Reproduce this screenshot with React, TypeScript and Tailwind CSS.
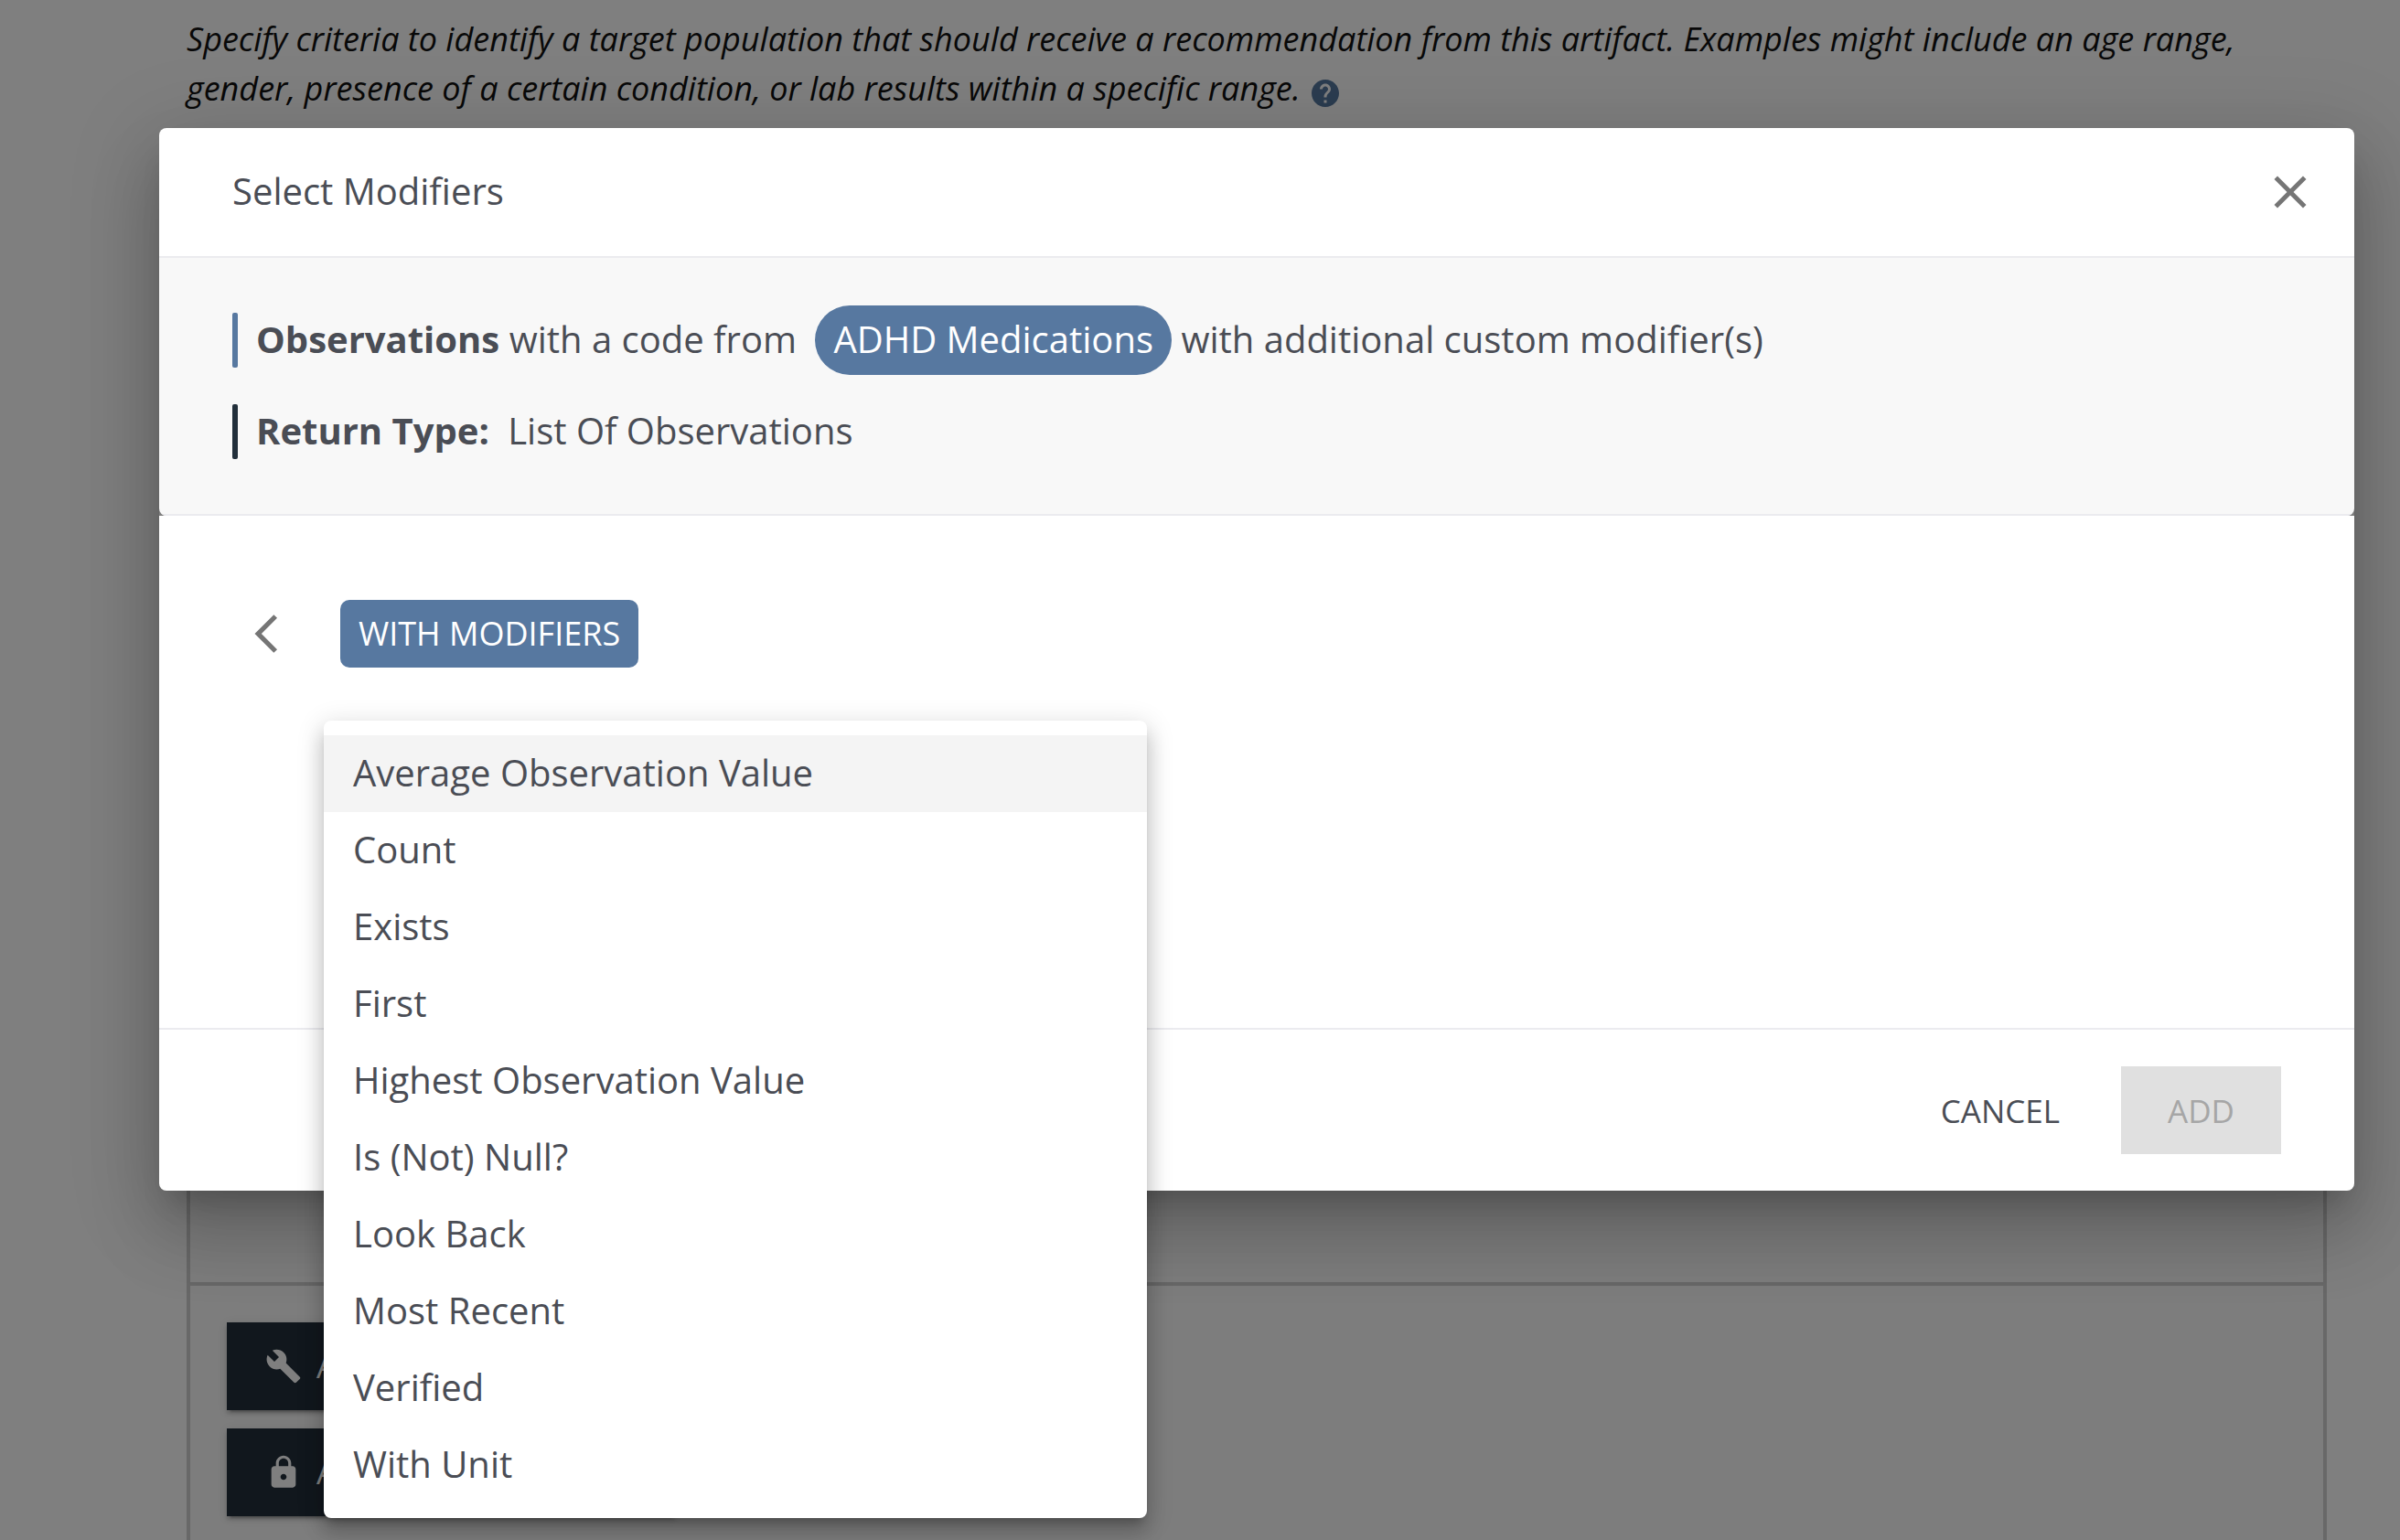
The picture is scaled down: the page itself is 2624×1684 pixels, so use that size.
import React from "react";
import { MdBuild, MdClose, MdHelp, MdLock } from "react-icons/md";

const modifiers = [
  "Average Observation Value",
  "Count",
  "Exists",
  "First",
  "Highest Observation Value",
  "Is (Not) Null?",
  "Look Back",
  "Most Recent",
  "Verified",
  "With Unit",
];

function BackIcon() {
  return (
    <svg viewBox="0 0 24 24" className="size-[50px]" fill="currentColor" aria-hidden="true">
      <path d="M17.77 3.77 16 2 6 12l10 10 1.77-1.77L9.54 12z" />
    </svg>
  );
}

function PageButton({ icon, label }: { icon: React.ReactNode; label: string }) {
  return (
    <button
      type="button"
      aria-label={label}
      className="flex h-24 w-[490px] items-center gap-4 bg-[#222f3b] px-[42px] text-left text-[35px] text-white shadow-[0_6px_2px_-4px_rgba(0,0,0,0.2),0_4px_4px_0_rgba(0,0,0,0.14),0_2px_10px_0_rgba(0,0,0,0.12)]"
    >
      {icon}
      {label.charAt(0)}
    </button>
  );
}

function ArtifactPage() {
  return (
    <main className="flex min-h-screen flex-col bg-white pt-4 pr-20 pl-[204px]">
      <p className="text-[36px] leading-[54px] text-[#111111] italic">
        Specify criteria to identify a target population that should receive a recommendation from
        this artifact. Examples might include an age range, gender, presence of a certain condition,
        or lab results within a specific range.{" "}
        <MdHelp className="inline size-9 align-[-10px] text-[#5778a0]" aria-label="Help" />
      </p>
      <section className="mt-10 flex flex-1 flex-col border-4 border-b-0 border-[#d0d0d0] bg-[#fafafa]">
        <div className="h-[1238px] border-b-4 border-[#d0d0d0]" />
        <div className="flex flex-col gap-5 p-10">
          <PageButton icon={<MdBuild className="size-10" />} label="Add element" />
          <PageButton icon={<MdLock className="size-10" />} label="Add base element" />
        </div>
      </section>
    </main>
  );
}

function ModifierMenu() {
  return (
    <ul
      role="listbox"
      aria-label="Select modifier"
      className="absolute top-56 left-[180px] w-[900px] rounded-lg bg-white py-4 shadow-[0_10px_10px_-6px_rgba(0,0,0,0.2),0_16px_20px_2px_rgba(0,0,0,0.14),0_6px_28px_4px_rgba(0,0,0,0.12)]"
    >
      {modifiers.map((name, i) => (
        <li
          key={name}
          role="option"
          aria-selected={i === 0}
          className={
            i === 0 ? "bg-[#f4f4f4] px-8 pt-[11px] pb-[13px]" : "px-8 pt-[11px] pb-[13px]"
          }
        >
          {name}
        </li>
      ))}
    </ul>
  );
}

function ModifierDialog() {
  return (
    <div
      role="dialog"
      aria-modal="true"
      aria-labelledby="dialog-title"
      className="rounded-lg text-[40px] leading-[60px] text-[#4a4d55] shadow-[0_22px_30px_-14px_rgba(0,0,0,0.2),0_48px_76px_6px_rgba(0,0,0,0.14),0_18px_92px_16px_rgba(0,0,0,0.12)]"
    >
      <div className="overflow-hidden rounded-lg">
        <header className="flex h-[140px] items-center justify-between bg-white pr-10 pl-20">
          <h2 id="dialog-title" className="pb-[2px]">
            Select Modifiers
          </h2>
          <button type="button" aria-label="Close" className="text-[#757575]">
            <MdClose className="size-[60px]" />
          </button>
        </header>
        <div className="flex flex-col gap-10 border-y-2 border-[#ebebef] bg-[#f8f8f8] px-20 py-[60px]">
          <div className="flex h-[60px] items-center">
            <span className="mr-5 h-[60px] w-[6px] rounded-xs bg-[#5778a0]" />
            <p>
              <strong className="font-bold">Observations</strong> with a code from{" "}
              <span className="ml-[10px] inline-block rounded-full bg-[#5778a0] px-5 pt-[7px] pb-[9px] text-white">
                ADHD Medications
              </span>{" "}
              with additional custom modifier(s)
            </p>
          </div>
          <div className="flex h-[60px] items-center">
            <span className="mr-5 h-[60px] w-[6px] rounded-xs bg-[#222f3b]" />
            <p className="pb-[2px]">
              <strong className="mr-[10px] font-bold">Return Type:</strong> List Of Observations
            </p>
          </div>
        </div>
      </div>
      <div className="relative h-[560px] bg-white px-20 pt-[92px]">
        <div className="flex items-center">
          <button type="button" aria-label="Back" className="mr-14 ml-3 text-[#757575]">
            <BackIcon />
          </button>
          <span className="rounded-[10px] bg-[#5778a0] px-5 py-[10px] text-[36px] leading-[54px] text-white">
            WITH MODIFIERS
          </span>
        </div>
        <ModifierMenu />
      </div>
      <footer className="flex justify-end gap-4 rounded-b-lg border-t-2 border-[#ebebef] bg-white px-20 py-10 text-[35px]">
        <button type="button" className="h-24 px-[51px] pt-[2px]">
          CANCEL
        </button>
        <button
          type="button"
          disabled
          className="h-24 bg-[#e0e0e0] px-[51px] pt-[2px] text-[#a6a6a6]"
        >
          ADD
        </button>
      </footer>
    </div>
  );
}

export default function App() {
  return (
    <div className="relative h-screen overflow-hidden font-['Open_Sans',sans-serif]">
      <ArtifactPage />
      <div className="absolute inset-0 bg-black/50 pt-[140px] pr-[50px] pl-[174px]">
        <ModifierDialog />
      </div>
    </div>
  );
}
